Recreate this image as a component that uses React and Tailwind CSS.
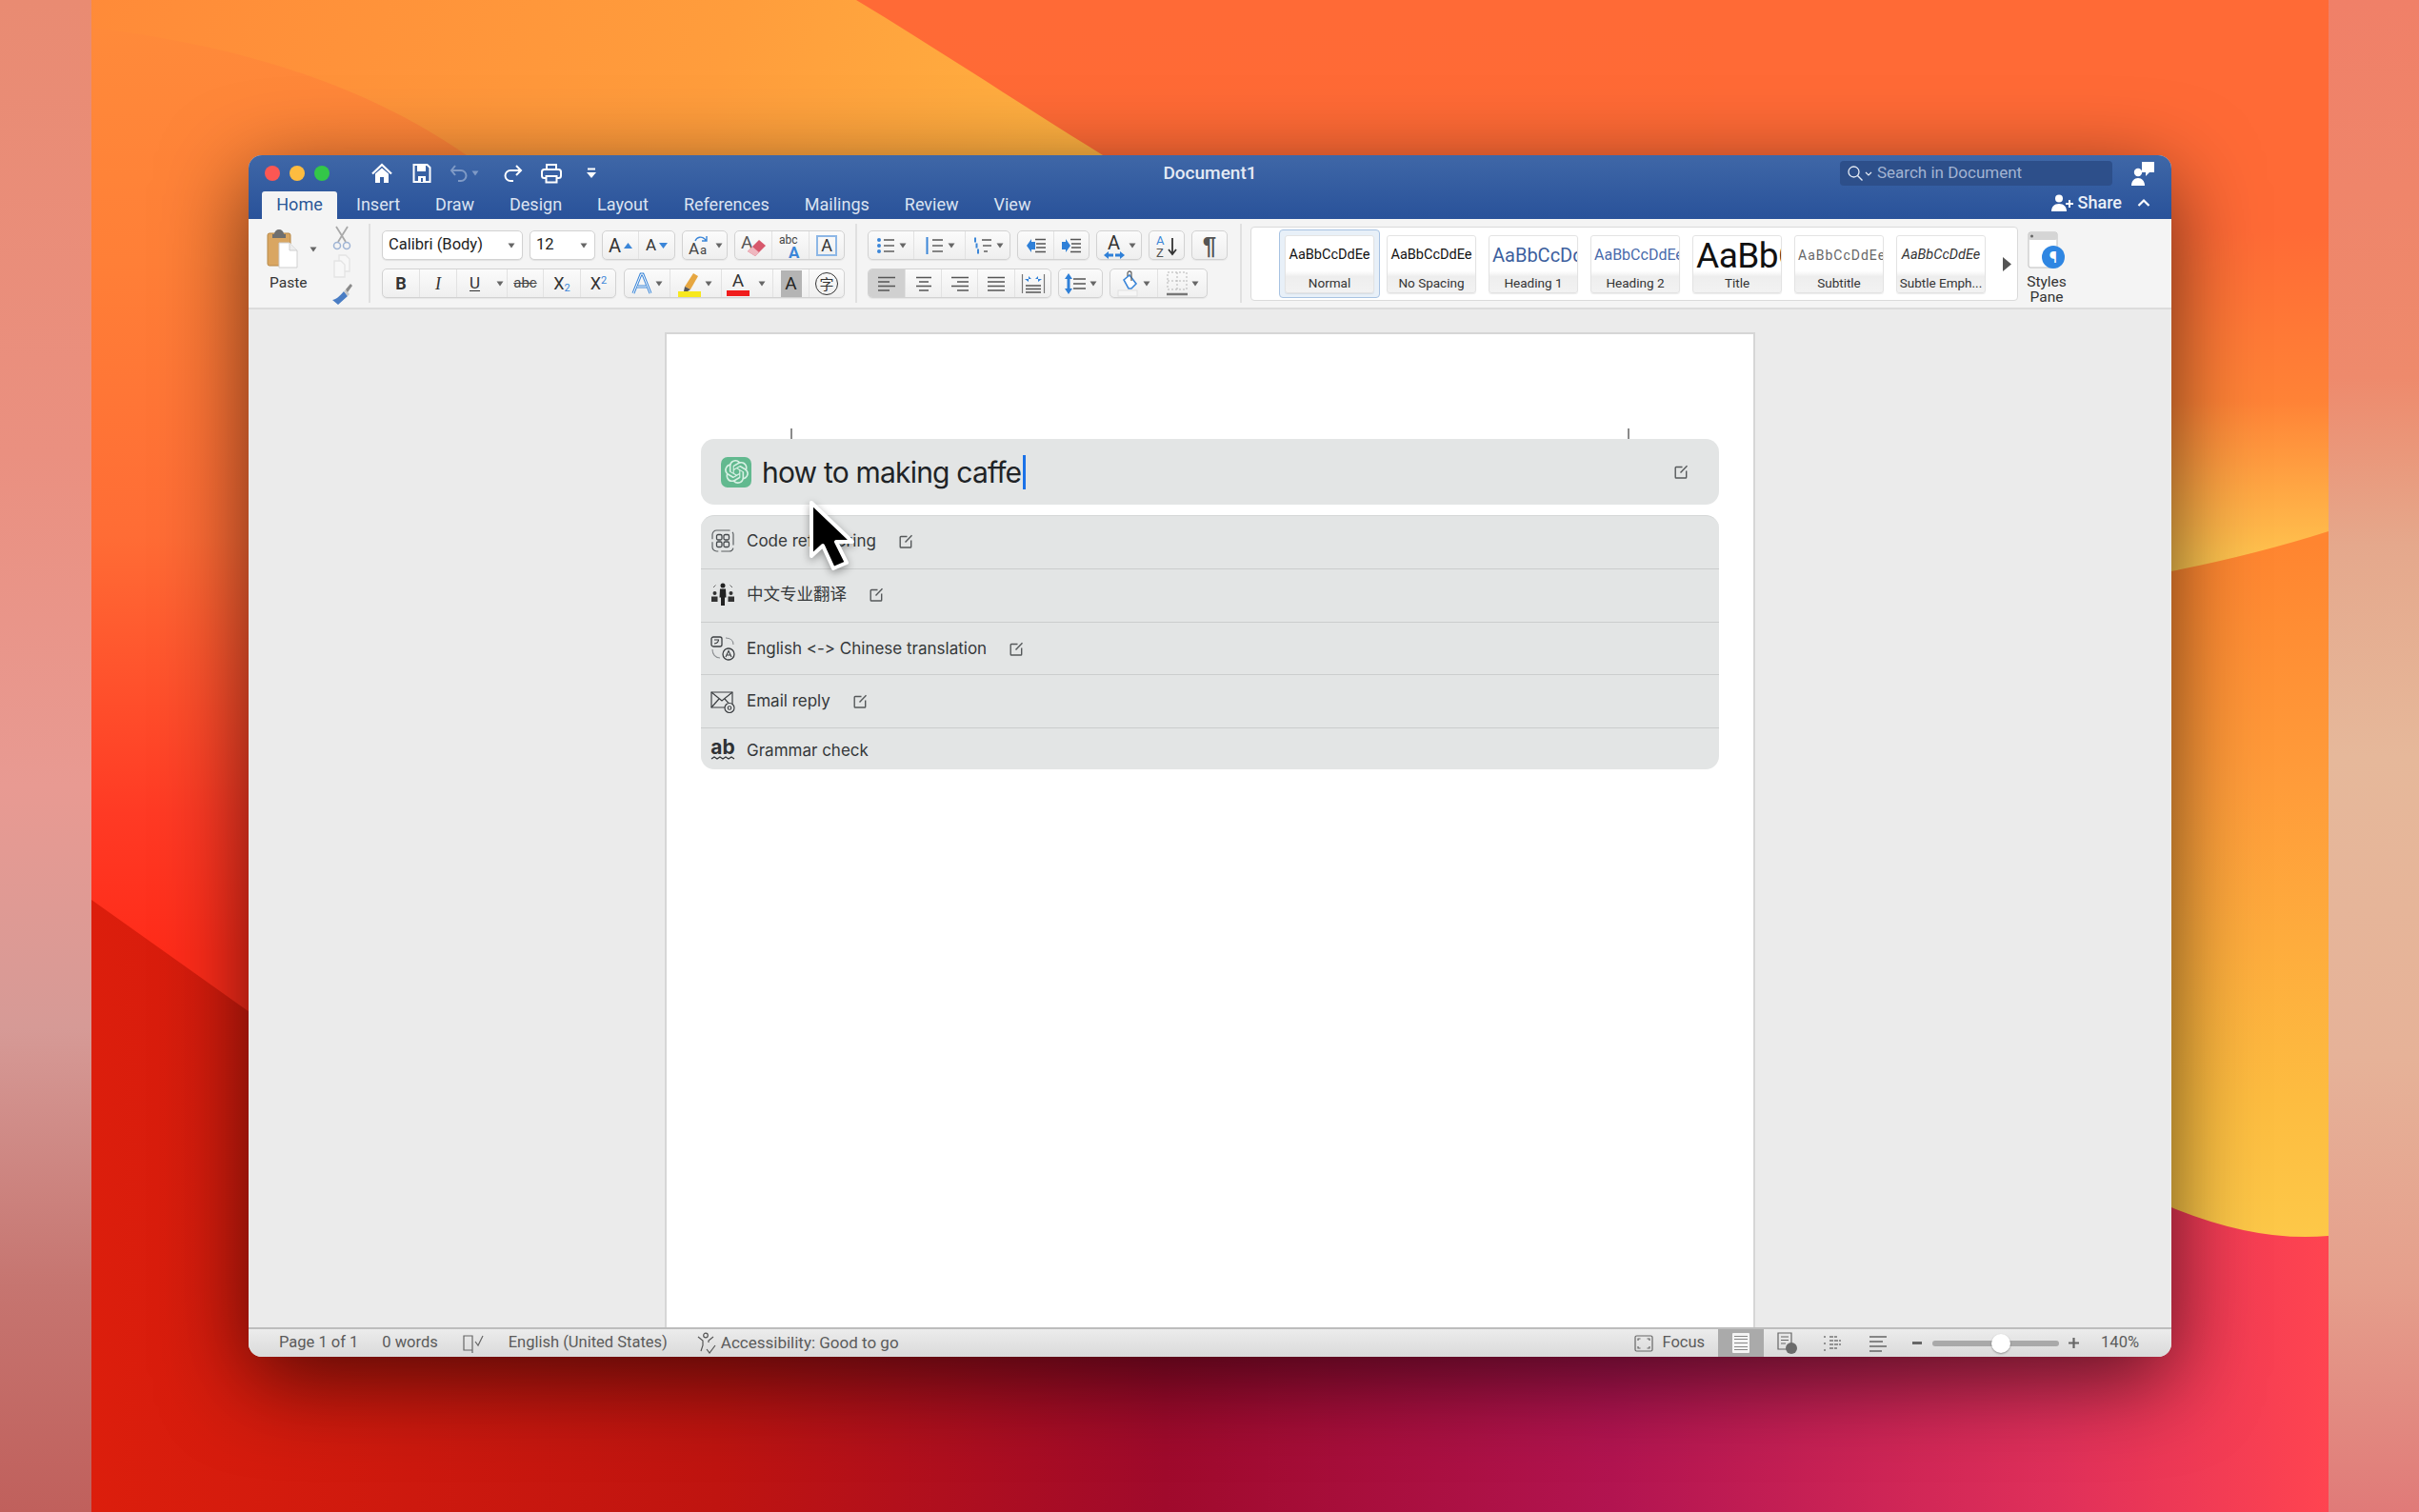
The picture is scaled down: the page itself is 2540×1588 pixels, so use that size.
import React from "react";
import { SiOpenai } from "react-icons/si";

const ui = "font-['Roboto','Liberation_Sans',sans-serif]";

const Caret = ({ c = "#666" }) => (
  <svg width="8" height="6" viewBox="0 0 8 6" className="shrink-0"><path d="M0.5 0.5h7L4 5.5z" fill={c} /></svg>
);

const Ic = ({ w = 24, h = 24, vb, children, className = "" }) => (
  <svg width={w} height={h} viewBox={vb || `0 0 ${w} ${h}`} fill="none" className={"shrink-0 " + className}>{children}</svg>
);

const Group = ({ w, children }) => (
  <div style={{ width: w }} className="h-[31px] flex rounded-[5px] border border-[#d2d2d2] bg-gradient-to-b from-[#fbfbfb] to-[#efefef] shadow-[0_1px_1px_rgba(0,0,0,0.06)] overflow-hidden shrink-0">
    {children}
  </div>
);

const Cell = ({ w, children, active, nb }) => (
  <div style={{ width: w }} className={`h-full flex items-center justify-center gap-[3px] shrink-0 ${nb ? "" : "border-r border-[#e2e2e2] last:border-r-0"} ${active ? "bg-[#d0d0d0]" : ""}`}>
    {children}
  </div>
);

const Lines = ({ kind }) => {
  const rows = { left: [[2, 20], [2, 14], [2, 20], [2, 14]], center: [[3, 19], [6, 16], [3, 19], [6, 16]], right: [[2, 20], [8, 20], [2, 20], [8, 20]], just: [[2, 20], [2, 20], [2, 20], [2, 20]] }[kind];
  return (
    <Ic w={22} h={22}>
      {rows.map((r, i) => (
        <path key={i} d={`M${r[0]} ${4.5 + i * 4.5}H${r[1]}`} stroke="#555" strokeWidth="1.4" />
      ))}
    </Ic>
  );
};

const ListGlyph = ({ kind }) => (
  <Ic w={22} h={22}>
    {[5, 11, 17].map((y, i) => (
      <g key={y}>
        {kind === "b" && <circle cx="4" cy={y} r="2" fill="#3b86d8" />}
        {kind === "n" && <rect x="2.5" y={y - 3} width="2" height="6" fill="#3b86d8" />}
        {kind === "m" && <rect x={2 + i * 1.5} y={y - 2.5} width="2" height="5" fill="#3b86d8" />}
        <path d={`M${kind === "m" ? 10 + i : 9} ${y}H${kind === "m" && i === 2 ? 16 : 20}`} stroke="#555" strokeWidth="1.4" />
      </g>
    ))}
  </Ic>
);

const Indent = ({ flip }) => (
  <Ic w={24} h={20}>
    <path d="M11 3.5H22M12 8H22M12 12H22M11 16.5H22" stroke="#555" strokeWidth="1.3" />
    {flip ? <path d="M2 6h4V3l5 7-5 7v-3H2z" fill="#2f80d8" /> : <path d="M11 6H7V3l-5 7 5 7v-3h4z" fill="#2f80d8" />}
  </Ic>
);

const Card = ({ label, preview, selected }) => {
  const inner = (
    <div className="w-[94px] h-[61px] rounded-[3px] border border-[#e3e3e3] bg-[linear-gradient(#ffffff_0%,#ffffff_62%,#eeeeee_72%,#f2f2f2_100%)] shadow-[0_1px_1px_rgba(0,0,0,0.08)] flex flex-col items-center overflow-hidden shrink-0">
      <div className="h-[41px] w-full px-[3px] flex items-center justify-center overflow-hidden whitespace-nowrap">{preview}</div>
      <div className="text-[13.5px] leading-[16px] text-[#333] whitespace-nowrap">{label}</div>
    </div>
  );
  return selected ? (
    <div className="w-[106px] h-[72px] rounded-[4px] border border-[#a8c3e2] bg-[#e8f0f8] flex items-center justify-center shrink-0">{inner}</div>
  ) : (
    inner
  );
};

const Edit = () => (
  <Ic w={15} h={15} vb="0 0 15 15">
    <path d="M8.5 2.5H2a.8.8 0 0 0-.8.8v9.900c0 .4.4.8.8.8h9.900c.4 0 .8-.4.8-.8V6.500" stroke="#55585a" strokeWidth="1.400" />
    <path d="M6.500 8.500 13.500 1.200" stroke="#55585a" strokeWidth="1.400" />
  </Ic>
);

const Row = ({ icon, text, edit = true, h, border = true, size = "text-[17px]", nudge = "" }) => (
  <div style={{ height: h }} className={`flex items-center pl-[10px] ${nudge} ${border ? "border-b border-[#cbcdcd]" : ""}`}>
    <div className="w-[26px] h-[26px] flex items-center justify-center shrink-0">{icon}</div>
    <span className={`ml-[12px] text-[#35383a] ${size} leading-none whitespace-nowrap [font-variant-ligatures:none] [font-feature-settings:'calt'_0]`}>{text}</span>
    {edit && <span className="ml-[24px] flex"><Edit /></span>}
  </div>
);

export default function App() {
  return (
    <div className={`relative w-[2540px] h-[1588px] overflow-hidden flex ${ui}`}>
      <svg className="absolute inset-0" width="2540" height="1588" viewBox="0 0 2540 1588">
        <defs>
          <linearGradient id="base" x1="0" y1="0" x2="0" y2="1">
            <stop offset="0" stopColor="#ff6a36" />
            <stop offset="0.25" stopColor="#ff6a34" />
            <stop offset="1" stopColor="#ff3a20" />
          </linearGradient>
          <linearGradient id="a" x1="0" y1="0" x2="1" y2="0.2">
            <stop offset="0" stopColor="#ff8838" />
            <stop offset="0.5" stopColor="#ff9d3c" />
            <stop offset="0.75" stopColor="#ffb040" />
            <stop offset="1" stopColor="#ffc044" />
          </linearGradient>
          <linearGradient id="b" gradientUnits="userSpaceOnUse" x1="0" y1="30" x2="0" y2="1000">
            <stop offset="0" stopColor="#ff8a3a" />
            <stop offset="0.25" stopColor="#ff7f37" />
            <stop offset="0.55" stopColor="#ff6c35" />
            <stop offset="0.85" stopColor="#ff3a24" />
            <stop offset="1" stopColor="#ff2c1a" />
          </linearGradient>
          <linearGradient id="d" gradientUnits="userSpaceOnUse" x1="0" y1="240" x2="0" y2="600">
            <stop offset="0" stopColor="#ff6a36" />
            <stop offset="0.5" stopColor="#ff8236" />
            <stop offset="1" stopColor="#ffc850" />
          </linearGradient>
          <linearGradient id="e" gradientUnits="userSpaceOnUse" x1="0" y1="570" x2="0" y2="1300">
            <stop offset="0" stopColor="#ff8530" />
            <stop offset="0.35" stopColor="#ff9c3a" />
            <stop offset="0.8" stopColor="#fdbc40" />
            <stop offset="1" stopColor="#fdc848" />
          </linearGradient>
          <linearGradient id="c" gradientUnits="userSpaceOnUse" x1="96" y1="0" x2="2445" y2="0">
            <stop offset="0" stopColor="#dc1e0c" />
            <stop offset="0.28" stopColor="#bf1410" />
            <stop offset="0.48" stopColor="#a00a2c" />
            <stop offset="0.68" stopColor="#b21450" />
            <stop offset="0.88" stopColor="#e0305a" />
            <stop offset="1" stopColor="#ff4450" />
          </linearGradient>
        </defs>
        <rect width="2540" height="1588" fill="url(#base)" />
        <path d="M0 0H899C990 55 1080 115 1158 163L1500 760L0 900Z" fill="url(#a)" />
        <path d="M0 20C220 35 370 80 490 163C800 400 900 800 900 1100H0Z" fill="url(#b)" />
        <path d="M1800 0H2540V720H1800Z" fill="url(#d)" />
        <path d="M1800 700L2280 600Q2370 582 2445 558H2540V1320H1800Z" fill="url(#e)" />
        <path d="M96 945L300 1090L1000 1200L2280 1268Q2370 1305 2445 1298H2540V1588H0V945Z" fill="url(#c)" />
      </svg>

      <div className="relative w-[96px] h-full bg-[linear-gradient(#e98b72_0%,#ea9080_30%,#e89a92_52%,#d69a96_68%,#c67570_85%,#c0605c_100%)]" />

      <div className="relative flex-1 flex items-center justify-center">
        <div className="w-[2019px] h-[1262px] flex flex-col rounded-[14px] overflow-hidden shadow-[0_24px_90px_rgba(0,0,0,0.6)] bg-[#ebebeb]">
          {/* Title bar + tabs */}
          <div className="h-[67px] shrink-0 bg-gradient-to-b from-[#3f67a7] to-[#29529a] flex flex-col">
            <div className="h-[37px] grid grid-cols-[1fr_auto_1fr] items-center">
              <div className="flex items-center pl-[17px]">
                <span className="w-4 h-4 rounded-full bg-[#fc5753]" />
                <span className="w-4 h-4 rounded-full bg-[#fdbc40] ml-[10px]" />
                <span className="w-4 h-4 rounded-full bg-[#33c748] ml-[10px]" />
                <Ic w={24} h={24} className="ml-[43px]">
                  <path d="M2 12.500 12 3l10 9.500" stroke="#fff" strokeWidth="2.200" />
                  <path d="M5 12.500 12 6.500l7 6V22h-5v-6h-4v6H5z" fill="#fff" />
                </Ic>
                <Ic w={22} h={24} className="ml-[19px]">
                  <path d="M2.500 3h14l3 3v15h-17z" stroke="#fff" strokeWidth="2" />
                  <path d="M6 3h9v7H6z" fill="#fff" />
                  <path d="M7 15h8v6H7z" fill="#fff" />
                  <path d="M10 17h2v4h-2z" fill="#3a62a4" />
                </Ic>
                <Ic w={20} h={22} className="ml-[18px]">
                  <path d="M6 3 2 8l4 5" stroke="#7f9ac6" strokeWidth="2" />
                  <path d="M2.500 8H12a5.500 5.500 0 0 1 5.500 5.500A5.500 5.500 0 0 1 12 19H9" stroke="#7f9ac6" strokeWidth="2" />
                </Ic>
                <span className="ml-[3px]"><Caret c="#7f9ac6" /></span>
                <Ic w={22} h={22} className="ml-[24px]">
                  <path d="M15 3l5 5-5 5" stroke="#fff" strokeWidth="2" />
                  <path d="M19.500 8H9a5.500 5.500 0 0 0-5.500 5.500A5.500 5.500 0 0 0 9 19h3" stroke="#fff" strokeWidth="2" />
                </Ic>
                <Ic w={24} h={24} className="ml-[18px]">
                  <path d="M7 8V3h10v5" stroke="#fff" strokeWidth="2" />
                  <rect x="2" y="8" width="20" height="9" rx="2.500" stroke="#fff" strokeWidth="2" />
                  <path d="M6.500 15h11v6.500h-11z" fill="#3a62a4" stroke="#fff" strokeWidth="2" />
                </Ic>
                <Ic w={12} h={14} className="ml-[24px]">
                  <path d="M2 2.500h8" stroke="#fff" strokeWidth="1.800" />
                  <path d="M1 6h10l-5 6z" fill="#fff" />
                </Ic>
              </div>
              <div className="text-[19px] font-medium text-[#e4eaf4] leading-none whitespace-nowrap">Document1</div>
              <div className="flex items-center justify-end pr-[17px]">
                <div className="w-[286px] h-[26px] rounded-[4px] bg-[#2d4f8a] flex items-center pl-[7px]">
                  <Ic w={18} h={18}>
                    <circle cx="7.500" cy="7.500" r="5.500" stroke="#e6ecf5" strokeWidth="1.300" />
                    <path d="m11.500 11.500 5 5" stroke="#e6ecf5" strokeWidth="1.400" />
                  </Ic>
                  <Ic w={8} h={6} className="ml-[1px] mt-[2px]"><path d="M1 1l3 3 3-3" stroke="#e6ecf5" strokeWidth="1.200" /></Ic>
                  <span className="ml-[5px] text-[17px] text-[#a3b4d2] leading-none whitespace-nowrap">Search in Document</span>
                </div>
                <Ic w={26} h={26} className="ml-[19px]">
                  <path d="M12 1h13v11h-5l-4 4v-4h-4z" fill="#fff" />
                  <circle cx="8" cy="12" r="4.200" fill="#fff" />
                  <path d="M1 26c0-5 3-8 7-8s7 3 7 8z" fill="#fff" />
                </Ic>
              </div>
            </div>
            <div className="h-[30px] flex items-end justify-between">
              <div className="flex items-end text-[18px] leading-none text-[#dbe3f1] pl-[14px]">
                <div className="w-[79px] h-[29px] bg-[#f4f4f4] rounded-t-[3px] text-[#2b5797] flex items-center justify-center pb-[2px]">Home</div>
                <div className="h-[29px] flex items-center gap-[37px] ml-[20px] pb-[2px] whitespace-nowrap">
                  <span>Insert</span><span>Draw</span><span>Design</span><span>Layout</span><span>References</span><span>Mailings</span><span>Review</span><span>View</span>
                </div>
              </div>
              <div className="h-[30px] flex items-center pr-[22px] pb-[4px]">
                <Ic w={24} h={18} vb="0 0 24 18">
                  <circle cx="8" cy="4.500" r="4" fill="#fff" />
                  <path d="M0 18c0-5 3-8 8-8s8 3 8 8z" fill="#fff" />
                  <path d="M19 6v8M15 10h8" stroke="#fff" strokeWidth="2" />
                </Ic>
                <span className="ml-[4px] text-[18px] font-medium text-[#eaf0f8] leading-none">Share</span>
                <Ic w={14} h={10} className="ml-[16px]"><path d="M1.500 8 7 2.500 12.500 8" stroke="#fff" strokeWidth="2.200" /></Ic>
              </div>
            </div>
          </div>

          {/* Ribbon */}
          <div className="h-[95px] shrink-0 bg-[#f4f4f4] border-b-2 border-[#dcdcdc] flex items-start pt-[5px]">
            {/* Clipboard */}
            <div className="w-[128px] h-[83px] border-r-2 border-[#e0e0e0] flex shrink-0">
              <div className="w-[84px] pl-[19px] pt-[5px] flex flex-col">
                <div className="flex items-center">
                  <Ic w={33} h={42}>
                    <rect x="1" y="5" width="24" height="34" rx="2" fill="#d9a662" stroke="#b78744" />
                    <path d="M8 6a5 5 0 0 1 10 0h2v4H6V6z" fill="#6f6f6f" />
                    <path d="M13 15h11l8 8v18H13z" fill="#fff" stroke="#cfcfcf" />
                    <path d="M24 15v8h8" fill="#ededed" stroke="#cfcfcf" />
                  </Ic>
                  <span className="ml-[12px] mt-[2px]"><Caret /></span>
                </div>
                <div className="text-[15.5px] leading-none text-[#333] ml-[3px] mt-[8px]">Paste</div>
              </div>
              <div className="flex flex-col items-center pt-[2px] ml-[2px]">
                <Ic w={20} h={26}>
                  <path d="M4 1l10 16M16 1 6 17" stroke="#a9a9a9" strokeWidth="1.800" />
                  <circle cx="5" cy="21" r="3.500" stroke="#9fb4d4" strokeWidth="1.500" />
                  <circle cx="15" cy="21" r="3.500" stroke="#9fb4d4" strokeWidth="1.500" />
                </Ic>
                <Ic w={20} h={26} className="mt-[4px]">
                  <path d="M7 1h7l4 4v13H7z" stroke="#e4e4e4" strokeWidth="1.300" fill="#f7f7f7" />
                  <path d="M2 7h7l4 4v13H2z" stroke="#e4e4e4" strokeWidth="1.300" fill="#f7f7f7" />
                </Ic>
                <Ic w={24} h={26} className="mt-[3px]">
                  <path d="M14 10l4 5-10 9-6-5c3 0 8-4 12-9z" fill="#4a7dc4" />
                  <path d="M14 10l4 5 2-2-4-5z" fill="#c9c9c9" />
                  <path d="M16 8l5-6 2 2-5 7z" fill="#8a8a8a" />
                </Ic>
              </div>
            </div>

            {/* Font */}
            <div className="w-[511px] h-[83px] border-r-2 border-[#e0e0e0] pl-[12px] pt-[7px] flex flex-col gap-[9px] shrink-0">
              <div className="flex gap-[7px] items-start">
                <div className="w-[148px] h-[31px] rounded-[5px] border border-[#d2d2d2] bg-white flex items-center justify-between pl-[6px] pr-[7px] shadow-[0_1px_1px_rgba(0,0,0,0.08)]">
                  <span className="text-[16.5px] text-[#222] leading-none whitespace-nowrap">Calibri (Body)</span><Caret />
                </div>
                <div className="w-[69px] h-[31px] rounded-[5px] border border-[#d2d2d2] bg-white flex items-center justify-between pl-[6px] pr-[7px] shadow-[0_1px_1px_rgba(0,0,0,0.08)]">
                  <span className="text-[16.5px] text-[#222] leading-none">12</span><Caret />
                </div>
                <Group w={77}>
                  <Cell w={38}>
                    <span className="text-[20px] leading-none text-[#333]">A</span>
                    <svg width="9" height="6" viewBox="0 0 9 6"><path d="M0 6 4.500 0 9 6z" fill="#3b86d8" /></svg>
                  </Cell>
                  <Cell w={37}>
                    <span className="text-[17px] leading-none text-[#333]">A</span>
                    <svg width="9" height="6" viewBox="0 0 9 6"><path d="M0 0h9L4.500 6z" fill="#3b86d8" /></svg>
                  </Cell>
                </Group>
                <Group w={48}>
                  <Cell w={46}>
                    <Ic w={26} h={24}>
                      <text x="1" y="21" fontSize="17" fill="#444" fontFamily="Roboto">A</text>
                      <text x="13" y="21" fontSize="13" fill="#444" fontFamily="Roboto">a</text>
                      <path d="M8 7a6 6 0 0 1 10-2l2 2M20 2v5h-5" stroke="#3b86d8" strokeWidth="1.400" />
                    </Ic>
                    <Caret />
                  </Cell>
                </Group>
                <Group w={116}>
                  <Cell w={39}>
                    <Ic w={30} h={28}>
                      <text x="2" y="17" fontSize="19" fill="#555" fontFamily="Roboto">A</text>
                      <path d="M9 20 21 8l7 6-11 11z" fill="#d7586c" />
                      <path d="M9 20l5-5 7 6-4 4z" fill="#efb7bf" />
                    </Ic>
                  </Cell>
                  <Cell w={39}>
                    <Ic w={28} h={28}>
                      <text x="2" y="12" fontSize="12" fill="#444" fontFamily="Roboto">abc</text>
                      <text x="12" y="27" fontSize="17" fontWeight="700" fill="#3b86d8" fontFamily="Roboto">A</text>
                    </Ic>
                  </Cell>
                  <Cell w={36}>
                    <div className="w-[22px] h-[22px] border-2 border-[#8db7e6] flex items-center justify-center text-[18px] leading-none text-[#333]">A</div>
                  </Cell>
                </Group>
              </div>
              <div className="flex gap-[8px] items-start">
                <Group w={246}>
                  <Cell w={39}><span className="text-[18px] font-bold text-[#333] leading-none">B</span></Cell>
                  <Cell w={39}><span className="text-[18px] italic font-['Liberation_Serif',serif] text-[#333] leading-none">I</span></Cell>
                  <Cell w={37} nb><span className="text-[17px] underline underline-offset-2 text-[#333] leading-none">U</span></Cell>
                  <Cell w={16}><Caret /></Cell>
                  <Cell w={38}><span className="text-[15px] line-through text-[#444] leading-none">abc</span></Cell>
                  <Cell w={39}><span className="text-[18px] text-[#333] leading-none">X<sub className="text-[11px] text-[#3b86d8]">2</sub></span></Cell>
                  <Cell w={37}><span className="text-[18px] text-[#333] leading-none">X<sup className="text-[11px] text-[#3b86d8]">2</sup></span></Cell>
                </Group>
                <Group w={232}>
                  <Cell w={48}>
                    <Ic w={22} h={24}>
                      <path d="M2 22 10 2h2l8 20M6 15h10" stroke="#3b86d8" strokeWidth="3" />
                      <path d="M2 22 10 2h2l8 20M6 15h10" stroke="#fff" strokeWidth="1" />
                    </Ic>
                    <Caret />
                  </Cell>
                  <Cell w={54}>
                    <Ic w={26} h={28} className="-ml-[3px]">
                      <path d="M8 17 17 3l5 3-8 14z" fill="#e6a640" />
                      <path d="M8 17l6 3-3 2H7z" fill="#555" />
                      <rect x="1" y="22" width="24" height="6" fill="#f7e81e" />
                    </Ic>
                    <Caret />
                  </Cell>
                  <Cell w={54}>
                    <div className="flex flex-col items-center w-[24px] -ml-[2px]">
                      <span className="text-[19px] leading-[21px] text-[#333]">A</span>
                      <span className="w-[24px] h-[6px] bg-[#f01c1c]" />
                    </div>
                    <span className="ml-[6px]"><Caret /></span>
                  </Cell>
                  <Cell w={38}>
                    <div className="w-[22px] h-[28px] bg-[#b4b4b4] flex items-center justify-center text-[19px] leading-none text-[#222]">A</div>
                  </Cell>
                  <Cell w={36}>
                    <div className="w-[24px] h-[24px] rounded-full border-[1.5px] border-[#333] flex items-center justify-center text-[15px] leading-none text-[#333] font-['Noto_Sans_CJK_SC',sans-serif]">字</div>
                  </Cell>
                </Group>
              </div>
            </div>

            {/* Paragraph */}
            <div className="w-[404px] h-[83px] border-r-2 border-[#e0e0e0] pl-[11px] pt-[7px] flex flex-col gap-[9px] shrink-0">
              <div className="flex gap-[7px] items-start">
                <Group w={150}>
                  <Cell w={48}><ListGlyph kind="b" /><Caret /></Cell>
                  <Cell w={54}><ListGlyph kind="n" /><Caret /></Cell>
                  <Cell w={46}><ListGlyph kind="m" /><Caret /></Cell>
                </Group>
                <Group w={76}>
                  <Cell w={38}><Indent /></Cell>
                  <Cell w={36}><Indent flip /></Cell>
                </Group>
                <Group w={48}>
                  <Cell w={46}>
                    <Ic w={24} h={28}>
                      <text x="5" y="18" fontSize="20" fill="#333" fontFamily="Roboto">A</text>
                      <path d="M1 24l5-4v2.500h5v3H6V28zM23 24l-5-4v2.500h-5v3h5V28z" fill="#2f80d8" />
                    </Ic>
                    <Caret />
                  </Cell>
                </Group>
                <Group w={38}>
                  <Cell w={36}>
                    <Ic w={26} h={28}>
                      <text x="2" y="13" fontSize="13" fill="#3b86d8" fontFamily="Roboto">A</text>
                      <text x="2" y="26" fontSize="13" fill="#555" fontFamily="Roboto">Z</text>
                      <path d="M19 6v16M15 18l4 5 4-5" stroke="#333" strokeWidth="1.800" />
                    </Ic>
                  </Cell>
                </Group>
                <Group w={38}>
                  <Cell w={36}><span className="text-[26px] font-['Liberation_Sans',sans-serif] font-bold text-[#555] leading-none">¶</span></Cell>
                </Group>
              </div>
              <div className="flex gap-[7px] items-start">
                <Group w={193}>
                  <Cell w={39} active><Lines kind="left" /></Cell>
                  <Cell w={38}><Lines kind="center" /></Cell>
                  <Cell w={38}><Lines kind="right" /></Cell>
                  <Cell w={39}><Lines kind="just" /></Cell>
                  <Cell w={37}>
                    <Ic w={26} h={26}>
                      <path d="M1.500 3v20M24.500 3v20" stroke="#777" strokeWidth="1.200" />
                      <path d="M4 8h7l-3-3v6zM22 8h-7l3-3v6z" fill="#2f80d8" />
                      <path d="M5 15h16M5 18.500h16M5 22h16" stroke="#555" strokeWidth="1.300" />
                    </Ic>
                  </Cell>
                </Group>
                <Group w={47}>
                  <Cell w={45}>
                    <Ic w={24} h={26}>
                      <path d="M10 8h13M10 13h13M10 18h13" stroke="#555" strokeWidth="1.300" />
                      <path d="M5 2l4 6H1zM5 24l4-6H1z" fill="#2f80d8" />
                      <path d="M3.500 8h3v10h-3z" fill="#2f80d8" />
                    </Ic>
                    <Caret />
                  </Cell>
                </Group>
                <Group w={103}>
                  <Cell w={50}>
                    <Ic w={24} h={28}>
                      <path d="M7 10 13 5l7 9-5 5-3 0z" stroke="#3b86d8" strokeWidth="1.600" fill="#fff" />
                      <path d="M11 6V3a2 2 0 0 1 4 0v8" stroke="#666" strokeWidth="1.300" />
                      <rect x="1" y="21" width="20" height="6" stroke="#e0e0e0" fill="#f6f6f6" />
                    </Ic>
                    <Caret />
                  </Cell>
                  <Cell w={51}>
                    <Ic w={24} h={28}>
                      <path d="M2 2h20v18H2zM12 2v18M2 11h20" stroke="#b5b5b5" strokeWidth="1" strokeDasharray="2 2" />
                      <path d="M1 25h22" stroke="#777" strokeWidth="2.500" />
                    </Ic>
                    <Caret />
                  </Cell>
                </Group>
              </div>
            </div>

            {/* Styles gallery */}
            <div className="ml-[9px] w-[806px] h-[78px] mt-[3px] rounded-[4px] border border-[#dadada] bg-white flex items-center pl-[29px] shrink-0">
              <Card selected label="Normal" preview={<span className="text-[14.5px] text-[#111]">AaBbCcDdEe</span>} />
              <div className="ml-[7px] flex gap-[13px]">
                <Card label="No Spacing" preview={<span className="text-[14.5px] text-[#111]">AaBbCcDdEe</span>} />
                <Card label="Heading 1" preview={<span className="text-[20px] text-[#3d5f9e] w-full text-left">AaBbCcDdEe</span>} />
                <Card label="Heading 2" preview={<span className="text-[16px] text-[#4a6bab] w-full text-left">AaBbCcDdEe</span>} />
                <Card label="Title" preview={<span className="text-[37px] text-[#111] w-full text-left leading-none tracking-[-0.5px]">AaBbCc</span>} />
                <Card label="Subtitle" preview={<span className="text-[14px] tracking-[1px] text-[#666] w-full text-left">AaBbCcDdEe</span>} />
                <Card label="Subtle Emph..." preview={<span className="text-[14.5px] italic text-[#333]">AaBbCcDdEe</span>} />
              </div>
              <svg width="9" height="15" viewBox="0 0 9 15" className="ml-[18px]"><path d="M0 0 9 7.500 0 15z" fill="#555" /></svg>
            </div>

            {/* Styles pane */}
            <div className="w-[60px] flex flex-col items-center pt-[8px] shrink-0">
              <Ic w={40} h={40}>
                <rect x="1" y="1" width="30" height="37" rx="2" fill="#fff" stroke="#bdbdbd" />
                <rect x="1" y="1" width="30" height="8" rx="2" fill="#d5d5d5" />
                <circle cx="4.500" cy="5" r="1.500" fill="#666" />
                <circle cx="27" cy="27" r="12" fill="#2f86e2" />
                <text x="27" y="33" fontSize="17" fill="#fff" textAnchor="middle" fontFamily="Roboto">¶</text>
              </Ic>
              <div className="text-[15.5px] leading-[16px] text-[#333] text-center mt-[5px]">Styles<br />Pane</div>
            </div>
          </div>

          {/* Canvas */}
          <div className="flex-1 min-h-0 flex justify-center pt-[24px] overflow-hidden">
            <div className="relative w-[1145px] bg-white border-x-2 border-t-2 border-[#d6d6d6] flex flex-col px-[36px] pt-[99px]">
              <div className="h-[11px] flex justify-between px-[94px] shrink-0">
                <span className="w-[2px] h-full bg-[#8a8a8a]" />
                <span className="w-[2px] h-full bg-[#8a8a8a]" />
              </div>
              <div className="font-['Inter','Noto_Sans_CJK_SC',sans-serif]">
                <div className="h-[69px] rounded-[14px] bg-[#e3e5e5] flex items-center pl-[21px] pr-[32px]">
                  <div className="w-[32px] h-[32px] rounded-[7px] bg-[#62b98f] flex items-center justify-center shrink-0">
                    <SiOpenai className="text-[#d6f0e3] text-[25px]" />
                  </div>
                  <span className="ml-[11px] text-[30px] tracking-[-0.8px] leading-none text-[#202326] whitespace-nowrap">how to making caffe</span>
                  <span className="ml-[2px] w-[3px] h-[36px] bg-[#1b72e8] shrink-0" />
                  <span className="ml-auto flex"><Edit /></span>
                </div>
                <div className="mt-[11px] h-[267px] rounded-[14px] bg-[#e3e5e5] overflow-hidden border-t border-[#d5d7d7]">
                  <Row h={56} nudge="pb-[3px]" text="Code refactoring" icon={
                    <Ic w={24} h={24}>
                      <rect x="1" y="1" width="22" height="22" rx="4.500" stroke="#5c6063" strokeWidth="1.200" strokeDasharray="14 3" />
                      <rect x="5.500" y="5.500" width="5.500" height="5.500" rx="1.500" stroke="#44484b" strokeWidth="1.300" />
                      <rect x="13" y="5.500" width="5.500" height="5.500" rx="1.500" stroke="#44484b" strokeWidth="1.300" />
                      <rect x="5.500" y="13" width="5.500" height="5.500" rx="1.500" stroke="#44484b" strokeWidth="1.300" />
                      <rect x="13" y="13" width="5.500" height="5.500" rx="1.500" stroke="#44484b" strokeWidth="1.300" />
                    </Ic>
                  } />
                  <Row h={56} nudge="pb-[3px]" size="text-[17.5px]" text="中文专业翻译" icon={
                    <Ic w={26} h={24}>
                      <circle cx="13" cy="3" r="2.500" fill="#222" />
                      <path d="M10 6.500h6l.5 9h-1.500V24h-4v-8.500H9.500z" fill="#222" />
                      <circle cx="4.500" cy="11" r="2" fill="#333" />
                      <path d="M1 14.500h6.500V20H1z" fill="#333" />
                      <circle cx="21.500" cy="11" r="2" fill="#333" />
                      <path d="M18.500 14.500H25V20h-6.500z" fill="#333" />
                      <path d="M3 5 5.500 2.500M23 5l-2.500-2.500" stroke="#666" strokeWidth="1" />
                    </Ic>
                  } />
                  <Row h={55} text="English <-> Chinese translation" icon={
                    <Ic w={26} h={26}>
                      <rect x="1" y="1" width="11" height="10" rx="2" stroke="#3c3f42" strokeWidth="1.300" />
                      <path d="M4 4h5M8.500 4c0 2-2 3.500-4.500 4" stroke="#3c3f42" strokeWidth="1.100" />
                      <circle cx="19" cy="19" r="6" stroke="#3c3f42" strokeWidth="1.300" />
                      <path d="M16 22l3-6.500 3 6.500M17.200 20h3.600" stroke="#3c3f42" strokeWidth="1.100" />
                      <path d="M16 2c4 0 8 2 8 7M2 14c0 5 3 9 8 9" stroke="#8a8d90" strokeWidth="1.100" />
                    </Ic>
                  } />
                  <Row h={56} text="Email reply" icon={
                    <Ic w={26} h={24}>
                      <path d="M1 2h22v16H1z" stroke="#3c3f42" strokeWidth="1.200" />
                      <path d="M1 2l11 9 11-9M1 18l8-9M23 18l-8-9" stroke="#3c3f42" strokeWidth="1.200" />
                      <circle cx="20" cy="18.500" r="5" fill="#e3e5e5" stroke="#3c3f42" strokeWidth="1.200" />
                      <circle cx="20" cy="18.500" r="1.800" stroke="#3c3f42" strokeWidth="1.100" />
                    </Ic>
                  } />
                  <Row h={43} nudge="pt-[3px]" border={false} edit={false} text="Grammar check" icon={
                    <Ic w={26} h={26}>
                      <text x="13" y="17" fontSize="21" fontWeight="700" fill="#2f3235" textAnchor="middle" fontFamily="Inter">ab</text>
                      <path d="M1 22l3-2 3 2 3-2 3 2 3-2 3 2 3-2 3 2" stroke="#2f3235" strokeWidth="1.300" />
                    </Ic>
                  } />
                </div>
              </div>
              {/* Mouse pointer overlay */}
              <svg className="absolute left-[149px] top-[173px] drop-shadow-[0_3px_4px_rgba(0,0,0,0.35)]" width="50" height="76" viewBox="0 0 50 76">
                <path d="M3 4V60L15 49 26 73 40 67 29 45H46z" fill="#000" stroke="#fff" strokeWidth="4" strokeLinejoin="round" />
              </svg>
            </div>
          </div>

          {/* Status bar */}
          <div className="h-[31px] shrink-0 border-t-2 border-[#bdbdbd] bg-gradient-to-b from-[#ececec] to-[#dadada] flex items-center text-[16.5px] text-[#5b5b5b] leading-none whitespace-nowrap pl-[32px] pr-[34px]">
            <span>Page 1 of 1</span>
            <span className="ml-[25px]">0 words</span>
            <Ic w={22} h={20} className="ml-[26px]">
              <path d="M1 2h9v15H1zM10 2v18" stroke="#666" strokeWidth="1.200" />
              <path d="M13 8l3 4 5-10" stroke="#666" strokeWidth="1.200" />
            </Ic>
            <span className="ml-[26px]">English (United States)</span>
            <Ic w={22} h={24} className="ml-[30px]">
              <circle cx="10" cy="3.500" r="2.300" stroke="#555" strokeWidth="1.200" />
              <path d="M2 5l5 4v5l-2 6M18 5l-5 4v2" stroke="#555" strokeWidth="1.200" />
              <path d="M11 18l3 4 6-8" stroke="#555" strokeWidth="1.200" />
            </Ic>
            <span className="ml-[4px] text-[17px]">Accessibility: Good to go</span>
            <div className="ml-auto flex items-center h-full">
              <Ic w={20} h={18}>
                <rect x="1" y="1" width="18" height="16" rx="1.500" stroke="#666" strokeWidth="1.200" />
                <path d="M4 6V4h2.500M13.500 4H16v2M4 12v2h2.500M13.500 14H16v-2" stroke="#666" strokeWidth="1.200" />
              </Ic>
              <span className="ml-[9px]">Focus</span>
              <div className="ml-[14px] w-[48px] h-full bg-[#aaaaaa] flex items-center justify-center">
                <div className="w-[18px] h-[21px] bg-[#f4f4f4] flex flex-col justify-evenly px-[2px] rounded-[1px]">
                  {[0, 1, 2, 3, 4].map((i) => <span key={i} className="h-[1px] bg-[#888]" />)}
                </div>
              </div>
              <Ic w={22} h={24} className="ml-[14px]">
                <path d="M1 1h14v17H1z" stroke="#666" strokeWidth="1.200" />
                <path d="M4 5h8M4 8.500h8M4 12h5" stroke="#666" strokeWidth="1.200" />
                <circle cx="15" cy="17" r="6" fill="#6b6b6b" />
              </Ic>
              <Ic w={20} h={18} className="ml-[26px]">
                <path d="M1 2h2M1 9h2M1 16h2M7 2h8M7 6h12M7 10h12M7 14h8" stroke="#777" strokeWidth="1.400" strokeDasharray="4 1" />
              </Ic>
              <Ic w={20} h={18} className="ml-[28px]">
                <path d="M1 2h18M1 7h14M1 12h18M1 17h13" stroke="#666" strokeWidth="1.400" />
              </Ic>
              <span className="ml-[26px] w-[10px] h-[3px] bg-[#666]" />
              <div className="ml-[11px] relative w-[133px] h-[6px] rounded-full bg-[#a9a9a9]">
                <span className="absolute left-[62px] -top-[7px] w-[20px] h-[20px] rounded-full bg-white shadow-[0_1px_2px_rgba(0,0,0,0.35)]" />
              </div>
              <svg width="11" height="11" viewBox="0 0 11 11" className="ml-[10px]"><path d="M5.500 0v11M0 5.500h11" stroke="#666" strokeWidth="2.200" /></svg>
              <span className="ml-[23px]">140%</span>
            </div>
          </div>
        </div>
      </div>

      <div className="relative w-[95px] h-full bg-[linear-gradient(#f08068_0%,#ee8a6c_25%,#e5a88c_36%,#e6b89a_50%,#e6b298_70%,#e59f8c_85%,#e07a78_100%)]" />
    </div>
  );
}
